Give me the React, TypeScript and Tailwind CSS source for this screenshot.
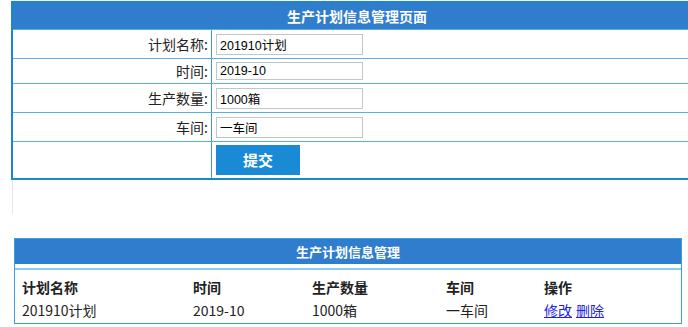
const font = { fontFamily: '"Noto Sans CJK SC", "Noto Sans", sans-serif' };

const fields = [
  { label: "计划名称:", value: "201910计划", row: "h-[29px]", input: "h-[21px]" },
  { label: "时间:", value: "2019-10", row: "h-[25px]", input: "h-[18px]" },
  { label: "生产数量:", value: "1000箱", row: "h-[29px]", input: "h-[21px]" },
  { label: "车间:", value: "一车间", row: "h-[29px]", input: "h-[21px]" },
];

function PlanForm() {
  return (
    <div className="ml-[11px] mt-[1px] w-[690px] border-2 border-r-0 border-[#1d87cc]">
      <div className="flex h-[26px] items-center justify-center bg-[#2f7dcc] text-[14px] font-bold text-white">
        生产计划信息管理页面
      </div>
      {fields.map((f) => (
        <div key={f.label} className={`grid grid-cols-[199px_1fr] border-t border-[#5aaee6] ${f.row}`}>
          <div className="flex items-center justify-end border-r border-[#3d9ad9] pr-[3px] text-[14px] text-[#222]">
            {f.label}
          </div>
          <div className="flex items-center pl-[4px]">
            <input
              readOnly
              value={f.value}
              className={`w-[147px] border border-[#c5c5c5] bg-white px-[3px] text-[12.5px] text-black outline-none ${f.input}`}
              style={{ fontFamily: '"Liberation Sans", "Noto Sans CJK SC", sans-serif' }}
            />
          </div>
        </div>
      ))}
      <div className="grid h-[37px] grid-cols-[199px_1fr] border-t border-[#5aaee6]">
        <div className="border-r border-[#3d9ad9]" />
        <div className="flex items-center pl-[4px]">
          <button className="h-[30px] w-[84px] bg-[#1a8ad6] text-[15px] font-bold text-white">提交</button>
        </div>
      </div>
    </div>
  );
}

const cols = ["计划名称", "时间", "生产数量", "车间", "操作"];

function PlanList() {
  return (
    <div className="ml-[14px] w-[668px] border border-[#37a0e0]">
      <div className="flex h-[25px] items-center justify-center bg-[#2f7dcc] text-[13px] font-bold text-white">
        生产计划信息管理
      </div>
      <div className="mt-[4px] h-[2px] bg-[#8cc8ec]" />
      <div className="grid grid-cols-[171px_119px_134px_98px_1fr] px-[7px] pt-[6px] pb-[1px] text-[14px] text-[#222]">
        {cols.map((c) => (
          <div key={c} className="h-[23px] font-bold leading-[23px]">{c}</div>
        ))}
        <div className="h-[23px] leading-[23px]">201910计划</div>
        <div className="h-[23px] leading-[23px]">2019-10</div>
        <div className="h-[23px] leading-[23px]">1000箱</div>
        <div className="h-[23px] leading-[23px]">一车间</div>
        <div className="flex h-[23px] gap-[4px] leading-[23px]">
          <a href="#" className="text-[#2222dd] underline">修改</a>
          <a href="#" className="text-[#2222dd] underline">删除</a>
        </div>
      </div>
    </div>
  );
}

export default function App() {
  return (
    <div className="h-[327px] w-[688px] overflow-hidden bg-white" style={font}>
      <PlanForm />
      <div className="ml-[12px] h-[34px] border-l border-[#e6e6e6]" />
      <div className="h-[24px]" />
      <PlanList />
    </div>
  );
}
